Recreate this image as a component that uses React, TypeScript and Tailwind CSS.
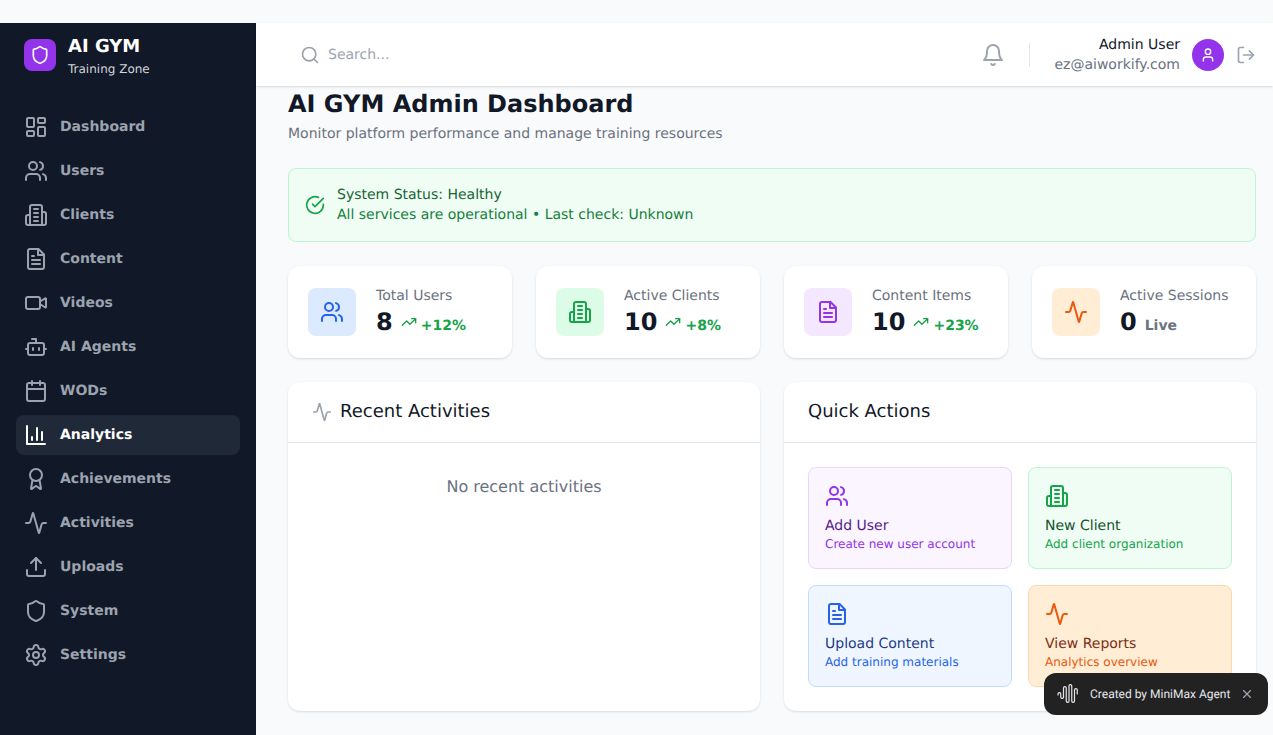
import {
  Activity,
  Award,
  Bot,
  Calendar,
  LayoutDashboard,
  Search,
  Settings,
  Shield,
  TrendingUp,
  Upload,
  User,
  Users,
  Video,
  X,
} from 'lucide-react';
import type { ReactNode } from 'react';

type IconProps = { className?: string };

function Svg({ className, children }: IconProps & { children: ReactNode }) {
  return (
    <svg
      viewBox="0 0 24 24"
      fill="none"
      stroke="currentColor"
      strokeWidth={2}
      strokeLinecap="round"
      strokeLinejoin="round"
      className={className}
    >
      {children}
    </svg>
  );
}

function Building({ className }: IconProps) {
  return (
    <Svg className={className}>
      <path d="M6 22V4a2 2 0 0 1 2-2h8a2 2 0 0 1 2 2v18Z" />
      <path d="M6 12H4a2 2 0 0 0-2 2v6a2 2 0 0 0 2 2h2" />
      <path d="M18 9h2a2 2 0 0 1 2 2v9a2 2 0 0 1-2 2h-2" />
      <path d="M10 6h4" />
      <path d="M10 10h4" />
      <path d="M10 14h4" />
      <path d="M10 18h4" />
    </Svg>
  );
}

function FileDoc({ className }: IconProps) {
  return (
    <Svg className={className}>
      <path d="M14.5 2H6a2 2 0 0 0-2 2v16a2 2 0 0 0 2 2h12a2 2 0 0 0 2-2V7.5L14.5 2z" />
      <polyline points="14 2 14 8 20 8" />
      <line x1="16" x2="8" y1="13" y2="13" />
      <line x1="16" x2="8" y1="17" y2="17" />
      <line x1="10" x2="8" y1="9" y2="9" />
    </Svg>
  );
}

function Chart({ className }: IconProps) {
  return (
    <Svg className={className}>
      <path d="M3 3v18h18" />
      <path d="M18 17V9" />
      <path d="M13 17V5" />
      <path d="M8 17v-3" />
    </Svg>
  );
}

function Bell({ className }: IconProps) {
  return (
    <Svg className={className}>
      <path d="M6 8a6 6 0 0 1 12 0c0 7 3 9 3 9H3s3-2 3-9" />
      <path d="M10.3 21a1.94 1.94 0 0 0 3.4 0" />
    </Svg>
  );
}

function LogOut({ className }: IconProps) {
  return (
    <Svg className={className}>
      <path d="M9 21H5a2 2 0 0 1-2-2V5a2 2 0 0 1 2-2h4" />
      <polyline points="16 17 21 12 16 7" />
      <line x1="21" x2="9" y1="12" y2="12" />
    </Svg>
  );
}

function CheckCircle({ className }: IconProps) {
  return (
    <Svg className={className}>
      <path d="M22 11.08V12a10 10 0 1 1-5.93-9.14" />
      <polyline points="22 4 12 14.01 9 11.01" />
    </Svg>
  );
}

const nav = [
  { label: 'Dashboard', icon: LayoutDashboard },
  { label: 'Users', icon: Users },
  { label: 'Clients', icon: Building },
  { label: 'Content', icon: FileDoc },
  { label: 'Videos', icon: Video },
  { label: 'AI Agents', icon: Bot },
  { label: 'WODs', icon: Calendar },
  { label: 'Analytics', icon: Chart, active: true },
  { label: 'Achievements', icon: Award },
  { label: 'Activities', icon: Activity },
  { label: 'Uploads', icon: Upload },
  { label: 'System', icon: Shield },
  { label: 'Settings', icon: Settings },
];

const stats = [
  { label: 'Total Users', value: '8', delta: '+12%', icon: Users, tile: 'bg-[#dbeafe]', color: 'text-[#2563eb]' },
  { label: 'Active Clients', value: '10', delta: '+8%', icon: Building, tile: 'bg-[#dcfce7]', color: 'text-[#16a34a]' },
  { label: 'Content Items', value: '10', delta: '+23%', icon: FileDoc, tile: 'bg-[#f3e8ff]', color: 'text-[#9333ea]' },
  { label: 'Active Sessions', value: '0', icon: Activity, tile: 'bg-[#ffedd5]', color: 'text-[#ea580c]' },
];

const actions = [
  {
    title: 'Add User',
    sub: 'Create new user account',
    icon: Users,
    box: 'bg-[#faf5ff] border-[#e9d5ff]',
    color: 'text-[#9333ea]',
    titleColor: 'text-[#581c87]',
  },
  {
    title: 'New Client',
    sub: 'Add client organization',
    icon: Building,
    box: 'bg-[#f0fdf4] border-[#bbf7d0]',
    color: 'text-[#16a34a]',
    titleColor: 'text-[#14532d]',
  },
  {
    title: 'Upload Content',
    sub: 'Add training materials',
    icon: FileDoc,
    box: 'bg-[#eff6ff] border-[#bfdbfe]',
    color: 'text-[#2563eb]',
    titleColor: 'text-[#1e3a8a]',
  },
  {
    title: 'View Reports',
    sub: 'Analytics overview',
    icon: Activity,
    box: 'bg-[#ffedd5] border-[#fed7aa]',
    color: 'text-[#ea580c]',
    titleColor: 'text-[#7c2d12]',
  },
];

export default function App() {
  return (
    <div className="relative h-[735px] overflow-hidden bg-[#f9fafb] pt-[23px] font-['DejaVu_Sans',sans-serif] [text-rendering:geometricPrecision]">
      <div className="flex h-full">
        <aside className="w-64 shrink-0 bg-[#111827]">
          <div className="flex items-center gap-3 px-6 pt-[10px]">
            <div className="flex h-8 w-8 items-center justify-center rounded-lg bg-[#9333ea]">
              <Shield className="h-5 w-5 text-white" />
            </div>
            <div>
              <div className="text-lg font-bold text-white">AI GYM</div>
              <div className="text-xs leading-4 text-[#d1d5db]">Training Zone</div>
            </div>
          </div>
          <nav className="mt-[30px] space-y-1 px-4">
            {nav.map((item) => (
              <div
                key={item.label}
                className={`flex h-10 items-center gap-3 rounded-lg px-2 text-sm font-bold ${
                  item.active ? 'bg-[#1f2937] text-white' : 'text-[#9ca3af]'
                }`}
              >
                <item.icon className="h-6 w-6 shrink-0" />
                {item.label}
              </div>
            ))}
          </nav>
        </aside>

        <div className="flex min-w-0 flex-1 flex-col">
          <header className="z-10 flex h-[63px] shrink-0 items-center justify-between bg-white pr-[17px] pl-11 shadow-sm">
            <div className="flex items-center gap-2 text-sm text-[#9ca3af]">
              <Search className="h-5 w-5" />
              Search...
            </div>
            <div className="flex items-center">
              <Bell className="h-6 w-6 text-[#9ca3af]" />
              <div className="mx-6 h-6 w-px bg-[#e5e7eb]" />
              <div className="text-right text-sm leading-5">
                <div className="text-[#111827]">Admin User</div>
                <div className="text-[#6b7280]">ez@aiworkify.com</div>
              </div>
              <div className="ml-3 flex h-8 w-8 items-center justify-center rounded-full bg-[#9333ea]">
                <User className="h-4 w-4 text-white" />
              </div>
              <LogOut className="ml-3 h-5 w-5 text-[#9ca3af]" />
            </div>
          </header>

          <main className="min-h-0 flex-1 overflow-hidden pt-[2px] pr-[17px] pl-8">
            <h1 className="text-2xl font-bold text-[#111827]">AI GYM Admin Dashboard</h1>
            <p className="mt-1 text-sm leading-5 text-[#6b7280]">
              Monitor platform performance and manage training resources
            </p>

            <div className="mt-6 flex h-[74px] items-center gap-3 rounded-lg border border-[#bbf7d0] bg-[#f0fdf4] px-4 text-sm leading-5">
              <CheckCircle className="h-5 w-5 text-[#16a34a]" />
              <div>
                <div className="text-[#166534]">System Status: Healthy</div>
                <div className="text-[#15803d]">All services are operational • Last check: Unknown</div>
              </div>
            </div>

            <div className="mt-6 grid grid-cols-4 gap-6">
              {stats.map((s) => (
                <div key={s.label} className="flex h-[92px] items-center gap-5 rounded-xl bg-white px-5 shadow-sm">
                  <div className={`flex h-12 w-12 shrink-0 items-center justify-center rounded-lg ${s.tile}`}>
                    <s.icon className={`h-6 w-6 ${s.color}`} />
                  </div>
                  <div>
                    <div className="text-sm leading-5 text-[#6b7280]">{s.label}</div>
                    <div className="flex items-baseline">
                      <span className="text-2xl leading-8 font-bold text-[#111827]">{s.value}</span>
                      {s.delta ? (
                        <span className="ml-2 flex items-baseline text-sm font-bold text-[#16a34a]">
                          <TrendingUp className="mr-1 h-4 w-4" />
                          {s.delta}
                        </span>
                      ) : (
                        <span className="ml-2 text-sm font-bold text-[#6b7280]">Live</span>
                      )}
                    </div>
                  </div>
                </div>
              ))}
            </div>

            <div className="mt-6 grid grid-cols-2 gap-6">
              <section className="h-[329px] rounded-xl bg-white shadow-sm">
                <div className="flex h-[61px] items-center gap-2 border-b border-[#e5e7eb] px-6 text-lg text-[#111827]">
                  <Activity className="h-5 w-5 text-[#9ca3af]" />
                  Recent Activities
                </div>
                <p className="pt-8 text-center leading-6 text-[#6b7280]">No recent activities</p>
              </section>

              <section className="h-[329px] rounded-xl bg-white shadow-sm">
                <div className="flex h-[61px] items-center border-b border-[#e5e7eb] px-6 text-lg text-[#111827]">
                  Quick Actions
                </div>
                <div className="grid grid-cols-2 gap-4 p-6">
                  {actions.map((a) => (
                    <div key={a.title} className={`h-[102px] rounded-lg border p-4 ${a.box}`}>
                      <a.icon className={`h-6 w-6 ${a.color}`} />
                      <div className={`mt-2 text-sm leading-5 ${a.titleColor}`}>{a.title}</div>
                      <div className={`text-xs leading-4 ${a.color}`}>{a.sub}</div>
                    </div>
                  ))}
                </div>
              </section>
            </div>
          </main>
        </div>
      </div>

      <div className="absolute right-[5px] bottom-[20px] flex h-[42px] w-[224px] items-center rounded-xl bg-[#222222] pr-[14px] pl-[13px] font-['Roboto',sans-serif] text-xs text-[#e5e7eb]">
        <svg viewBox="0 0 24 24" fill="none" stroke="currentColor" strokeWidth={1.2} strokeLinecap="round" className="h-6 w-6 shrink-0">
          <path d="M1 13v-1a1.375 1.375 0 0 1 2.75 0v3a1.375 1.375 0 0 0 2.75 0V6a1.375 1.375 0 0 1 2.75 0v13a1.375 1.375 0 0 0 2.75 0V4a1.375 1.375 0 0 1 2.75 0v15a1.375 1.375 0 0 0 2.75 0V8a1.375 1.375 0 0 1 2.75 0v4" />
        </svg>
        <span className="ml-[9px] whitespace-nowrap">Created by MiniMax Agent</span>
        <X className="ml-auto h-[14px] w-[14px] text-[#9ca3af]" />
      </div>
    </div>
  );
}
